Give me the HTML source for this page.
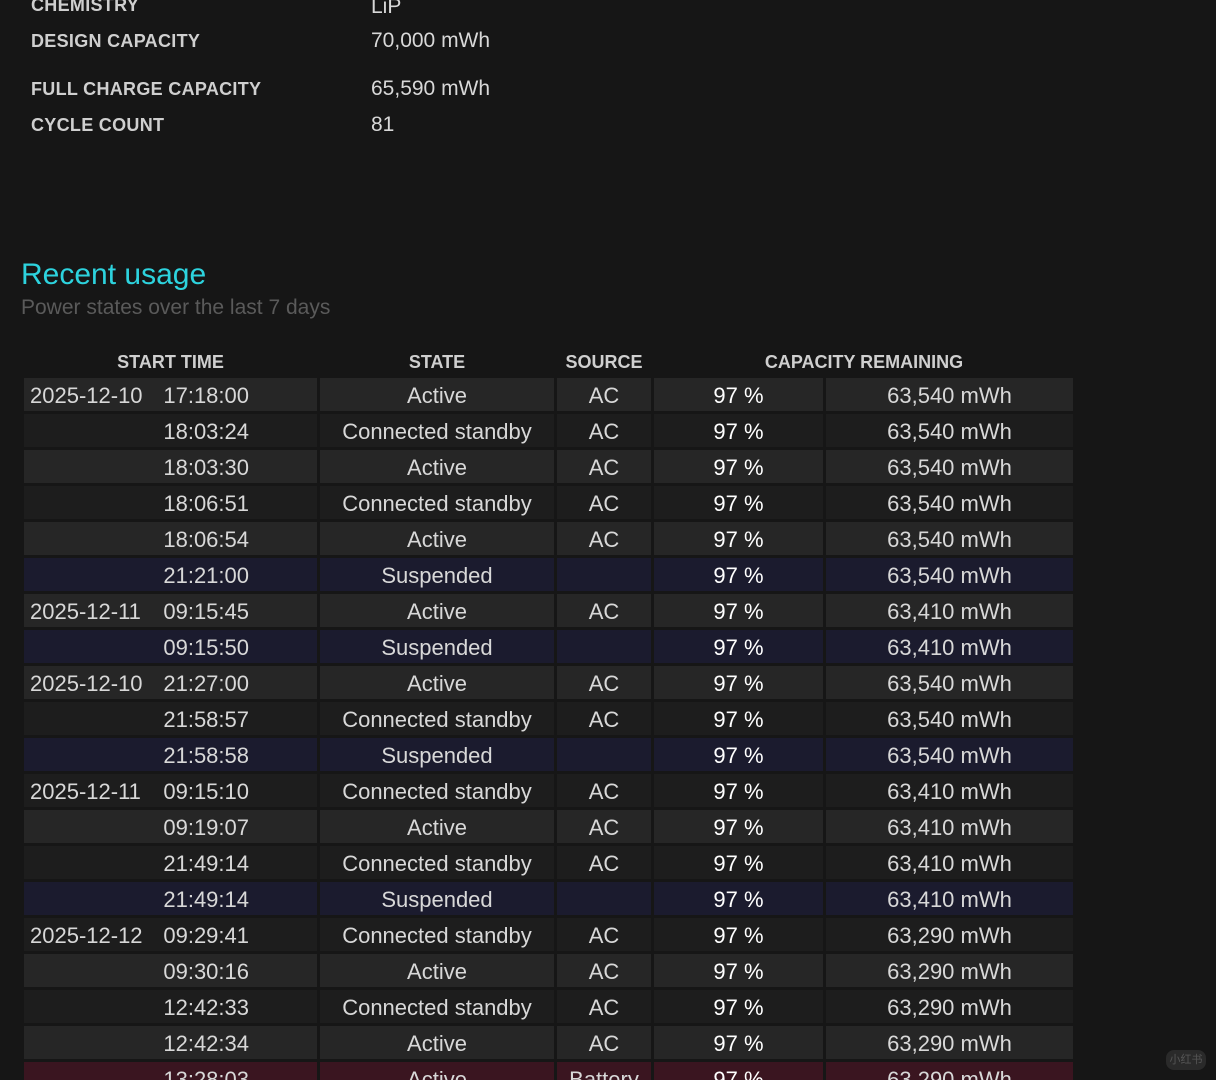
<!DOCTYPE html>
<html><head><meta charset="utf-8"><style>
html{height:1080px;overflow:hidden}
body{margin:0;width:1216px;height:1080px;background:#161616;overflow:hidden;font-family:"Liberation Sans",sans-serif;color:#d8d8d8;position:relative}
.a{position:absolute;white-space:nowrap}
.lbl{font-size:18px;font-weight:bold;color:#cfcfcf;left:31px;letter-spacing:.3px}
.val{font-size:21px;left:371px;color:#d8d8d8}
.hd{position:absolute;top:352px;font-size:18px;font-weight:bold;color:#cfcfcf;text-align:center}
.r{position:absolute;left:24px;width:1050px;height:33px;font-size:22px;line-height:36px}
.r div{position:absolute;top:0;height:33px;text-align:center}
.c0{left:0;width:293px}.c1{left:296px;width:234px}.c2{left:533px;width:94px}.c3{left:630px;width:169px;color:#fff}.c4{left:802px;width:247px}
.L div{background:#262626}.D div{background:#1d1d1d}.S div{background:#1b1b2e}.B div{background:#3a1520}
.r .c0{text-align:left}
.dt{position:absolute;left:6px}.tm{position:absolute;right:68px}
</style></head><body>
<div class="a lbl" style="top:-5px">CHEMISTRY</div><div class="a val" style="top:-5px">LiP</div>
<div class="a lbl" style="top:31px">DESIGN CAPACITY</div><div class="a val" style="top:29px">70,000 mWh</div>
<div class="a lbl" style="top:79px">FULL CHARGE CAPACITY</div><div class="a val" style="top:77px">65,590 mWh</div>
<div class="a lbl" style="top:115px">CYCLE COUNT</div><div class="a val" style="top:113px">81</div>
<div class="a" style="left:21px;top:258px;font-size:30px;color:#2dd3de">Recent usage</div>
<div class="a" style="left:21px;top:296px;font-size:21px;color:#5a5a5a">Power states over the last 7 days</div>
<div class="hd" style="left:24px;width:293px">START TIME</div>
<div class="hd" style="left:320px;width:234px">STATE</div>
<div class="hd" style="left:557px;width:94px">SOURCE</div>
<div class="hd" style="left:654px;width:420px">CAPACITY REMAINING</div>
<div class="r L" style="top:378px"><div class="c0"><span class="dt">2025-12-10</span><span class="tm">17:18:00</span></div><div class="c1">Active</div><div class="c2">AC</div><div class="c3">97 %</div><div class="c4">63,540 mWh</div></div>
<div class="r D" style="top:414px"><div class="c0"><span class="tm">18:03:24</span></div><div class="c1">Connected standby</div><div class="c2">AC</div><div class="c3">97 %</div><div class="c4">63,540 mWh</div></div>
<div class="r L" style="top:450px"><div class="c0"><span class="tm">18:03:30</span></div><div class="c1">Active</div><div class="c2">AC</div><div class="c3">97 %</div><div class="c4">63,540 mWh</div></div>
<div class="r D" style="top:486px"><div class="c0"><span class="tm">18:06:51</span></div><div class="c1">Connected standby</div><div class="c2">AC</div><div class="c3">97 %</div><div class="c4">63,540 mWh</div></div>
<div class="r L" style="top:522px"><div class="c0"><span class="tm">18:06:54</span></div><div class="c1">Active</div><div class="c2">AC</div><div class="c3">97 %</div><div class="c4">63,540 mWh</div></div>
<div class="r S" style="top:558px"><div class="c0"><span class="tm">21:21:00</span></div><div class="c1">Suspended</div><div class="c2"></div><div class="c3">97 %</div><div class="c4">63,540 mWh</div></div>
<div class="r L" style="top:594px"><div class="c0"><span class="dt">2025-12-11</span><span class="tm">09:15:45</span></div><div class="c1">Active</div><div class="c2">AC</div><div class="c3">97 %</div><div class="c4">63,410 mWh</div></div>
<div class="r S" style="top:630px"><div class="c0"><span class="tm">09:15:50</span></div><div class="c1">Suspended</div><div class="c2"></div><div class="c3">97 %</div><div class="c4">63,410 mWh</div></div>
<div class="r L" style="top:666px"><div class="c0"><span class="dt">2025-12-10</span><span class="tm">21:27:00</span></div><div class="c1">Active</div><div class="c2">AC</div><div class="c3">97 %</div><div class="c4">63,540 mWh</div></div>
<div class="r D" style="top:702px"><div class="c0"><span class="tm">21:58:57</span></div><div class="c1">Connected standby</div><div class="c2">AC</div><div class="c3">97 %</div><div class="c4">63,540 mWh</div></div>
<div class="r S" style="top:738px"><div class="c0"><span class="tm">21:58:58</span></div><div class="c1">Suspended</div><div class="c2"></div><div class="c3">97 %</div><div class="c4">63,540 mWh</div></div>
<div class="r D" style="top:774px"><div class="c0"><span class="dt">2025-12-11</span><span class="tm">09:15:10</span></div><div class="c1">Connected standby</div><div class="c2">AC</div><div class="c3">97 %</div><div class="c4">63,410 mWh</div></div>
<div class="r L" style="top:810px"><div class="c0"><span class="tm">09:19:07</span></div><div class="c1">Active</div><div class="c2">AC</div><div class="c3">97 %</div><div class="c4">63,410 mWh</div></div>
<div class="r D" style="top:846px"><div class="c0"><span class="tm">21:49:14</span></div><div class="c1">Connected standby</div><div class="c2">AC</div><div class="c3">97 %</div><div class="c4">63,410 mWh</div></div>
<div class="r S" style="top:882px"><div class="c0"><span class="tm">21:49:14</span></div><div class="c1">Suspended</div><div class="c2"></div><div class="c3">97 %</div><div class="c4">63,410 mWh</div></div>
<div class="r D" style="top:918px"><div class="c0"><span class="dt">2025-12-12</span><span class="tm">09:29:41</span></div><div class="c1">Connected standby</div><div class="c2">AC</div><div class="c3">97 %</div><div class="c4">63,290 mWh</div></div>
<div class="r L" style="top:954px"><div class="c0"><span class="tm">09:30:16</span></div><div class="c1">Active</div><div class="c2">AC</div><div class="c3">97 %</div><div class="c4">63,290 mWh</div></div>
<div class="r D" style="top:990px"><div class="c0"><span class="tm">12:42:33</span></div><div class="c1">Connected standby</div><div class="c2">AC</div><div class="c3">97 %</div><div class="c4">63,290 mWh</div></div>
<div class="r L" style="top:1026px"><div class="c0"><span class="tm">12:42:34</span></div><div class="c1">Active</div><div class="c2">AC</div><div class="c3">97 %</div><div class="c4">63,290 mWh</div></div>
<div class="r B" style="top:1062px;height:18px;overflow:hidden"><div class="c0"><span class="tm">13:28:03</span></div><div class="c1">Active</div><div class="c2">Battery</div><div class="c3">97 %</div><div class="c4">63,290 mWh</div></div>
<div class="a" style="left:1166px;top:1050px;width:40px;height:20px;border-radius:8px;background:#2a2a2a;color:#555;font-size:11px;line-height:20px;text-align:center;font-family:'Liberation Sans','Noto Sans CJK SC',sans-serif">小红书</div>
</body></html>
